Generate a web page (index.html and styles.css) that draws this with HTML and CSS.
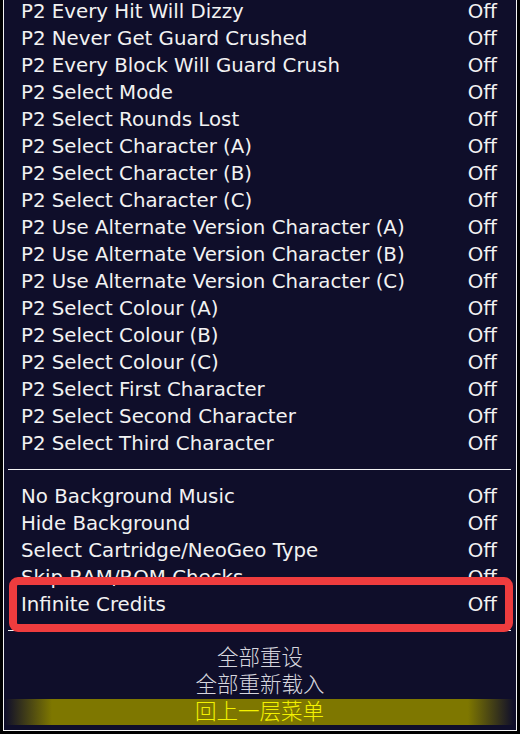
FILE: index.html
```html
<!DOCTYPE html>
<html lang="zh-CN">
<head>
<meta charset="utf-8">
<title>Cheats</title>
<link rel="stylesheet" href="styles.css">
</head>
<body>
<div class="panel">
  <ul class="list list-top">
    <li class="row"><span>P2 Every Hit Will Dizzy</span><span>Off</span></li>
    <li class="row"><span>P2 Never Get Guard Crushed</span><span>Off</span></li>
    <li class="row"><span>P2 Every Block Will Guard Crush</span><span>Off</span></li>
    <li class="row"><span>P2 Select Mode</span><span>Off</span></li>
    <li class="row"><span>P2 Select Rounds Lost</span><span>Off</span></li>
    <li class="row"><span>P2 Select Character (A)</span><span>Off</span></li>
    <li class="row"><span>P2 Select Character (B)</span><span>Off</span></li>
    <li class="row"><span>P2 Select Character (C)</span><span>Off</span></li>
    <li class="row"><span>P2 Use Alternate Version Character (A)</span><span>Off</span></li>
    <li class="row"><span>P2 Use Alternate Version Character (B)</span><span>Off</span></li>
    <li class="row"><span>P2 Use Alternate Version Character (C)</span><span>Off</span></li>
    <li class="row"><span>P2 Select Colour (A)</span><span>Off</span></li>
    <li class="row"><span>P2 Select Colour (B)</span><span>Off</span></li>
    <li class="row"><span>P2 Select Colour (C)</span><span>Off</span></li>
    <li class="row"><span>P2 Select First Character</span><span>Off</span></li>
    <li class="row"><span>P2 Select Second Character</span><span>Off</span></li>
    <li class="row"><span>P2 Select Third Character</span><span>Off</span></li>
  </ul>
  <div class="sep sep-1"></div>
  <ul class="list">
    <li class="row"><span>No Background Music</span><span>Off</span></li>
    <li class="row"><span>Hide Background</span><span>Off</span></li>
    <li class="row"><span>Select Cartridge/NeoGeo Type</span><span>Off</span></li>
    <li class="row"><span>Skip RAM/ROM Checks</span><span>Off</span></li>
    <li class="row"><span>Infinite Credits</span><span>Off</span></li>
  </ul>
  <div class="sep sep-2"></div>
  <ul class="actions">
    <li class="action">全部重设</li>
    <li class="action">全部重新载入</li>
    <li class="action action-selected">回上一层菜单</li>
  </ul>
  <div class="highlight-box"></div>
</div>
</body>
</html>
```

FILE: styles.css
```css
html, body {
  margin: 0;
  padding: 0;
  background: #000;
}

.panel {
  position: relative;
  box-sizing: border-box;
  width: 514px;
  height: 731px;
  margin-left: 3px;
  background: #0f0e2a;
  border: 1px solid #f4f4f4;
  border-top: 0;
  overflow: hidden;
  font-family: "DejaVu Sans", sans-serif;
  font-size: 19.8px;
  color: #f2f2f2;
}

.list {
  list-style: none;
  margin: 0;
  padding: 0 19px 0 17px;
}

.list-top {
  margin-top: -2px;
}

.row {
  display: flex;
  justify-content: space-between;
  height: 27px;
  line-height: 27px;
  white-space: nowrap;
}

.sep {
  height: 1px;
  background: #f4f4f4;
  margin: 0 5px 0 4px;
}

.sep-1 {
  margin-top: 12px;
  margin-bottom: 13px;
}

.sep-2 {
  margin-top: 12px;
  margin-bottom: 14px;
}

.actions {
  list-style: none;
  margin: 0;
  padding: 0;
  font-family: "DejaVu Sans", "Noto Sans CJK SC", sans-serif;
  font-weight: 300;
  font-size: 21.5px;
  color: #d6d6de;
  text-align: center;
}

.action {
  height: 27px;
  line-height: 26px;
}

.action-selected {
  height: 26px;
  line-height: 26px;
  margin: 0 2px 0 1px;
  color: #f4f200;
  background: linear-gradient(to right, #0f0e2a 0, #7e7700 47px, #7e7700 calc(100% - 46px), #0f0e2a 100%);
}

.highlight-box {
  position: absolute;
  left: 5px;
  top: 577px;
  width: 504px;
  height: 55px;
  box-sizing: border-box;
  border: 8px solid #ee3c3e;
  border-radius: 9px;
}
```
